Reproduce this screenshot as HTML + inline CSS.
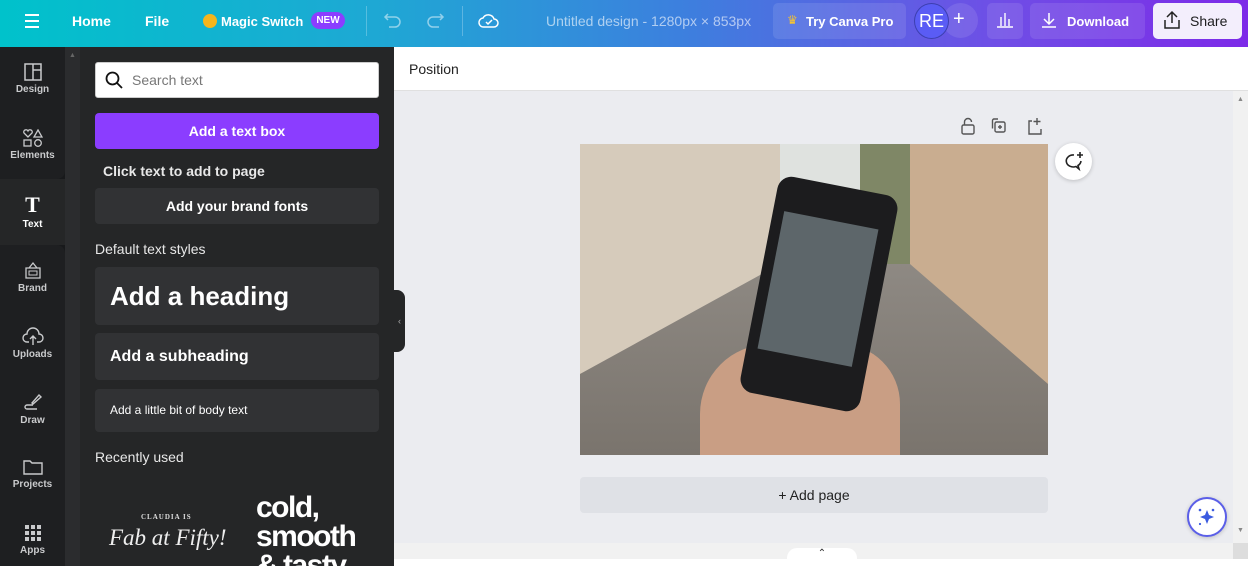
<!DOCTYPE html>
<html><head><style>
*{margin:0;padding:0;box-sizing:border-box}
html,body{width:1248px;height:566px;overflow:hidden}
body{font-family:"Liberation Sans",sans-serif;background:#ebecf0;position:relative}
.hdr{position:absolute;left:0;top:0;width:1248px;height:47px;background:linear-gradient(90deg,#00c2cb 0%,#1ea8d4 30%,#3d7fde 55%,#6f4ee6 80%,#7d2ae8 100%);color:#fff}
.hdr .t{position:absolute;top:13px;font-size:14px;font-weight:bold}
.btn{position:absolute;top:3px;height:36px;border-radius:5px;background:rgba(255,255,255,.1)}
.rail{position:absolute;left:0;top:47px;width:65px;height:519px;background:#18191b}
.ri{position:absolute;left:0;width:65px;text-align:center;color:#c9cacc;font-size:10px;font-weight:bold}
.ri svg{display:block;margin:0 auto 3px}
.sb{position:absolute;left:65px;top:47px;width:15px;height:519px;background:#2b2c2e}
.panel{position:absolute;left:80px;top:47px;width:314px;height:519px;background:#252627;color:#fff;overflow:hidden}
.card{position:absolute;left:15px;width:284px;background:#313234;border-radius:4px}
</style></head><body>
<div class="hdr">
  <div style="position:absolute;left:25px;top:14px;width:14px">
   <div style="height:2px;background:#fff;margin-bottom:4px"></div><div style="height:2px;background:#fff;margin-bottom:4px"></div><div style="height:2px;background:#fff"></div></div>
  <div class="t" style="left:72px">Home</div>
  <div class="t" style="left:145px">File</div>
  <div style="position:absolute;left:203px;top:14px;width:14px;height:14px;border-radius:50%;background:#f5b51c"></div>
  <div class="t" style="left:221px;font-size:13px;top:14px">Magic Switch</div>
  <div style="position:absolute;left:311px;top:12px;width:34px;height:17px;border-radius:9px;background:#8b3dff;font-size:10px;font-weight:bold;text-align:center;line-height:17px">NEW</div>
  <div style="position:absolute;left:366px;top:6px;width:1px;height:30px;background:rgba(255,255,255,.25)"></div>
  <svg style="position:absolute;left:383px;top:11px" width="20" height="18" fill="none" stroke="rgba(255,255,255,.5)" stroke-width="1.5"><path d="M5 3L2 6l3 3M2 6h10a5 5 0 0 1 0 10H6"/></svg>
  <svg style="position:absolute;left:425px;top:11px" width="20" height="18" fill="none" stroke="rgba(255,255,255,.5)" stroke-width="1.5"><path d="M15 3l3 3-3 3M18 6H8a5 5 0 0 0 0 10h6"/></svg>
  <div style="position:absolute;left:462px;top:6px;width:1px;height:30px;background:rgba(255,255,255,.25)"></div>
  <svg style="position:absolute;left:478px;top:11px" width="22" height="18" viewBox="0 0 22 18"><path d="M6 16h10a4 4 0 0 0 0-8 6 6 0 0 0-11-1 4.5 4.5 0 0 0 1 9z" fill="none" stroke="#fff" stroke-width="1.5"/><path d="M8 11l2 2 4-4" fill="none" stroke="#fff" stroke-width="1.5"/></svg>
  <div class="t" style="left:546px;font-weight:normal;color:rgba(255,255,255,.6)">Untitled design - 1280px × 853px</div>
  <div class="btn" style="left:773px;width:133px"></div>
  <div style="position:absolute;left:787px;top:13px;color:#f8c430;font-size:12px">♛</div>
  <div class="t" style="left:806px;font-size:13px;top:14px">Try Canva Pro</div>
  <div style="position:absolute;left:943px;top:3px;width:35px;height:35px;border-radius:50%;background:rgba(255,255,255,.1)"></div>
  <div style="position:absolute;left:914px;top:3px;width:35px;height:36px;border-radius:50%;background:#5a5cf5;border:1px solid #3c3fb0;text-align:center;line-height:34px;font-size:18px">RE</div>
  <div style="position:absolute;left:953px;top:8px;font-size:20px">+</div>
  <div class="btn" style="left:987px;width:36px"></div>
  <svg style="position:absolute;left:995px;top:11px" width="20" height="18"><path d="M2 16h16M6 15V6M10 15V2M14 15V8" stroke="#fff" stroke-width="1.4"/></svg>
  <div class="btn" style="left:1030px;width:115px"></div>
  <svg style="position:absolute;left:1040px;top:11px" width="18" height="18"><path d="M9 2v11M4 8l5 5 5-5M2 16h14" fill="none" stroke="#fff" stroke-width="1.5"/></svg>
  <div class="t" style="left:1067px;font-size:13px;top:14px">Download</div>
  <div style="position:absolute;left:1153px;top:3px;width:89px;height:36px;border-radius:5px;background:#f3eefc"></div>
  <svg style="position:absolute;left:1162px;top:10px" width="20" height="20"><path d="M10 2v11M5 7l5-5 5 5M3 10v8h14v-8" fill="none" stroke="#222" stroke-width="1.5"/></svg>
  <div class="t" style="left:1190px;color:#1d1d1f;font-weight:normal">Share</div>
</div>

<div class="rail">
  <div style="position:absolute;left:0;top:0;width:65px;height:132px;background:#1e1f21;border-bottom-right-radius:8px"></div>
  <div style="position:absolute;left:0;top:132px;width:65px;height:66px;background:#252627"></div>
  <div style="position:absolute;left:0;top:198px;width:65px;height:321px;background:#1e1f21;border-top-right-radius:8px"></div>
  <div class="ri" style="top:16px"><svg width="18" height="18"><rect x="1" y="1" width="16" height="16" fill="none" stroke="#c9cacc" stroke-width="1.5"/><path d="M9 1v16M9 7h8" stroke="#c9cacc" stroke-width="1.5"/></svg>Design</div>
  <div class="ri" style="top:82px"><svg width="20" height="18"><path d="M5 8L1 4a2 2 0 0 1 4-2 2 2 0 0 1 4 2z" fill="none" stroke="#c9cacc" stroke-width="1.3"/><path d="M15 1l4 7h-8z" fill="none" stroke="#c9cacc" stroke-width="1.3"/><rect x="1" y="11" width="7" height="6" fill="none" stroke="#c9cacc" stroke-width="1.3"/><circle cx="15" cy="14" r="3.3" fill="none" stroke="#c9cacc" stroke-width="1.3"/></svg>Elements</div>
  <div class="ri" style="top:148px;color:#fff"><div style="font-size:22px;font-family:'Liberation Serif',serif;line-height:20px;margin-bottom:4px">T</div>Text</div>
  <div class="ri" style="top:213px"><svg width="20" height="20"><path d="M3 8h14v10H3zM6 8l4-5 4 5" fill="none" stroke="#c9cacc" stroke-width="1.3"/><rect x="6" y="11" width="8" height="4" fill="none" stroke="#c9cacc"/></svg>Brand</div>
  <div class="ri" style="top:279px"><svg width="22" height="20"><path d="M7 16H5a4 4 0 0 1 0-8 6 6 0 0 1 12 0 4 4 0 0 1 0 8h-2M11 19v-9M8 13l3-3 3 3" fill="none" stroke="#c9cacc" stroke-width="1.4"/></svg>Uploads</div>
  <div class="ri" style="top:345px"><svg width="20" height="20"><path d="M9 11l7-8 2 2-8 7zM10 13H4a2 2 0 0 0 0 4h10" fill="none" stroke="#c9cacc" stroke-width="1.4"/></svg>Draw</div>
  <div class="ri" style="top:411px"><svg width="20" height="18"><path d="M1 3h6l2 2h10v11H1z" fill="none" stroke="#c9cacc" stroke-width="1.4"/></svg>Projects</div>
  <div class="ri" style="top:477px"><svg width="18" height="18" fill="#c9cacc"><rect x="1" y="1" width="4" height="4"/><rect x="7" y="1" width="4" height="4"/><rect x="13" y="1" width="4" height="4"/><rect x="1" y="7" width="4" height="4"/><rect x="7" y="7" width="4" height="4"/><rect x="13" y="7" width="4" height="4"/><rect x="1" y="13" width="4" height="4"/><rect x="7" y="13" width="4" height="4"/><rect x="13" y="13" width="4" height="4"/></svg>Apps</div>
</div>
<div class="sb"><div style="position:absolute;left:4px;top:5px;font-size:7px;color:#666">▲</div></div>
<div class="panel">
  <div style="position:absolute;left:15px;top:15px;width:284px;height:36px;background:#fff;border-radius:3px;border:1px solid #ccc"></div>
  <svg style="position:absolute;left:25px;top:24px" width="18" height="18"><circle cx="7.5" cy="7.5" r="6" fill="none" stroke="#111" stroke-width="1.8"/><path d="M12 12l5 5" stroke="#111" stroke-width="1.8"/></svg>
  <div style="position:absolute;left:52px;top:25px;font-size:14px;color:#777">Search text</div>
  <div style="position:absolute;left:15px;top:66px;width:284px;height:36px;background:#8b3dff;border-radius:4px;text-align:center;line-height:36px;font-size:14px;font-weight:bold">Add a text box</div>
  <div style="position:absolute;left:23px;top:116px;font-size:14px;font-weight:bold;color:#e8e8e8">Click text to add to page</div>
  <div class="card" style="top:141px;height:36px;text-align:center;line-height:36px;font-size:14px;font-weight:bold">Add your brand fonts</div>
  <div style="position:absolute;left:15px;top:194px;font-size:14px;color:#e8e8e8">Default text styles</div>
  <div class="card" style="top:220px;height:58px;padding-left:15px;line-height:58px;font-size:26px;font-weight:bold">Add a heading</div>
  <div class="card" style="top:286px;height:47px;padding-left:15px;line-height:47px;font-size:16px;font-weight:bold">Add a subheading</div>
  <div class="card" style="top:342px;height:43px;padding-left:15px;line-height:43px;font-size:12px">Add a little bit of body text</div>
  <div style="position:absolute;left:15px;top:402px;font-size:14px;color:#e8e8e8">Recently used</div>
  <div style="position:absolute;left:61px;top:466px;font-size:7px;font-family:'Liberation Serif',serif;font-weight:bold;color:#ddd;letter-spacing:1px">CLAUDIA IS</div>
  <div style="position:absolute;left:29px;top:478px;font-size:23px;font-family:'Liberation Serif',serif;font-style:italic;color:#eee">Fab at Fifty!</div>
  <div style="position:absolute;left:176px;top:446px;font-size:30px;font-weight:bold;line-height:29px;color:#fff;letter-spacing:-1.5px">cold,<br>smooth<br>&amp; tasty</div>
</div>
<div style="position:absolute;left:394px;top:290px;width:11px;height:62px;background:#252627;border-radius:0 8px 8px 0;color:#aaa;font-size:9px;text-align:center;line-height:62px">‹</div>

<div style="position:absolute;left:394px;top:47px;width:854px;height:44px;background:#fff;border-bottom:1px solid #e0e0e0"></div>
<div style="position:absolute;left:409px;top:61px;font-size:14px;color:#222">Position</div>
<div style="position:absolute;left:1233px;top:91px;width:15px;height:452px;background:#f1f1f1"><div style="font-size:7px;color:#888;text-align:center;margin-top:5px">▲</div><div style="font-size:7px;color:#888;text-align:center;margin-top:424px">▼</div></div>
<div style="position:absolute;left:394px;top:543px;width:854px;height:16px;background:#f1f1f1"></div>
<div style="position:absolute;left:1233px;top:543px;width:15px;height:16px;background:#ddd"></div>
<div style="position:absolute;left:394px;top:559px;width:854px;height:7px;background:#fff"></div>
<div style="position:absolute;left:787px;top:548px;width:70px;height:18px;background:#fff;border-radius:10px 10px 0 0;text-align:center;font-size:10px;color:#333">⌃</div>

<svg style="position:absolute;left:960px;top:117px" width="88" height="20" fill="none" stroke="#555" stroke-width="1.4">
<rect x="2" y="8" width="12" height="9" rx="1.5"/><path d="M4.5 8V5a3.5 3.5 0 0 1 7 0"/>
<rect x="35" y="5" width="10" height="10" rx="1.5"/><path d="M38 2h-4a1.5 1.5 0 0 0-1.5 1.5v8M40 8v4M38 10h4"/>
<path d="M72 4h-3v13h12v-5M77 1v7M73.5 4.5h7"/>
</svg>
<div style="position:absolute;left:1055px;top:143px;width:37px;height:37px;border-radius:50%;background:#fff;box-shadow:0 1px 4px rgba(0,0,0,.2)"></div>
<svg style="position:absolute;left:1062px;top:150px" width="24" height="24" fill="none" stroke="#222" stroke-width="1.6"><path d="M12 5a7 6 0 1 0 2 11.5L17 19l-1-3.5A6 6 0 0 0 19 11"/><path d="M18 2v6M15 5h6"/></svg>

<div style="position:absolute;left:580px;top:144px;width:468px;height:311px;overflow:hidden;background:#b8ada0">
  <svg width="468" height="311" style="position:absolute;left:0;top:0">
    <defs><linearGradient id="g" x1="0" y1="0" x2="0" y2="1"><stop offset="0" stop-color="#8e8983"/><stop offset="1" stop-color="#7a746d"/></linearGradient></defs>
    <polygon points="0,0 200,0 200,150 0,230" fill="#d6cbbb"/>
    <polygon points="200,0 300,0 300,120 200,120" fill="#dfe2df"/>
    <polygon points="280,0 340,0 340,130 280,130" fill="#7f8766"/>
    <polygon points="330,0 468,0 468,240 330,140" fill="#c9ad90"/>
    <polygon points="0,230 200,120 330,120 468,240 468,311 0,311" fill="url(#g)"/>
  </svg>
  <div style="position:absolute;left:120px;top:200px;width:200px;height:140px;background:#c99e84;border-radius:70px 60px 0 0"></div>
  <div style="position:absolute;left:178px;top:40px;width:122px;height:220px;background:#1c1c1e;border-radius:14px;transform:rotate(11deg)"></div>
  <div style="position:absolute;left:190px;top:75px;width:96px;height:140px;background:#5d666a;transform:rotate(11deg)"></div>
</div>
<div style="position:absolute;left:580px;top:477px;width:468px;height:36px;background:#dfe1e6;border-radius:4px;text-align:center;line-height:36px;font-size:14px;color:#222">+ Add page</div>
<div style="position:absolute;left:1187px;top:497px;width:40px;height:40px;border-radius:50%;background:#fff;border:2px solid #5b5fe8;box-shadow:0 1px 4px rgba(0,0,0,.2)"></div>
<svg style="position:absolute;left:1196px;top:506px" width="22" height="22" fill="#3b5be0"><path d="M11 4l2 5 5 2-5 2-2 5-2-5-5-2 5-2z"/><circle cx="4" cy="4" r="1.3"/><circle cx="17" cy="4" r="1.3"/><circle cx="4" cy="18" r="1.1"/></svg>
</body></html>
